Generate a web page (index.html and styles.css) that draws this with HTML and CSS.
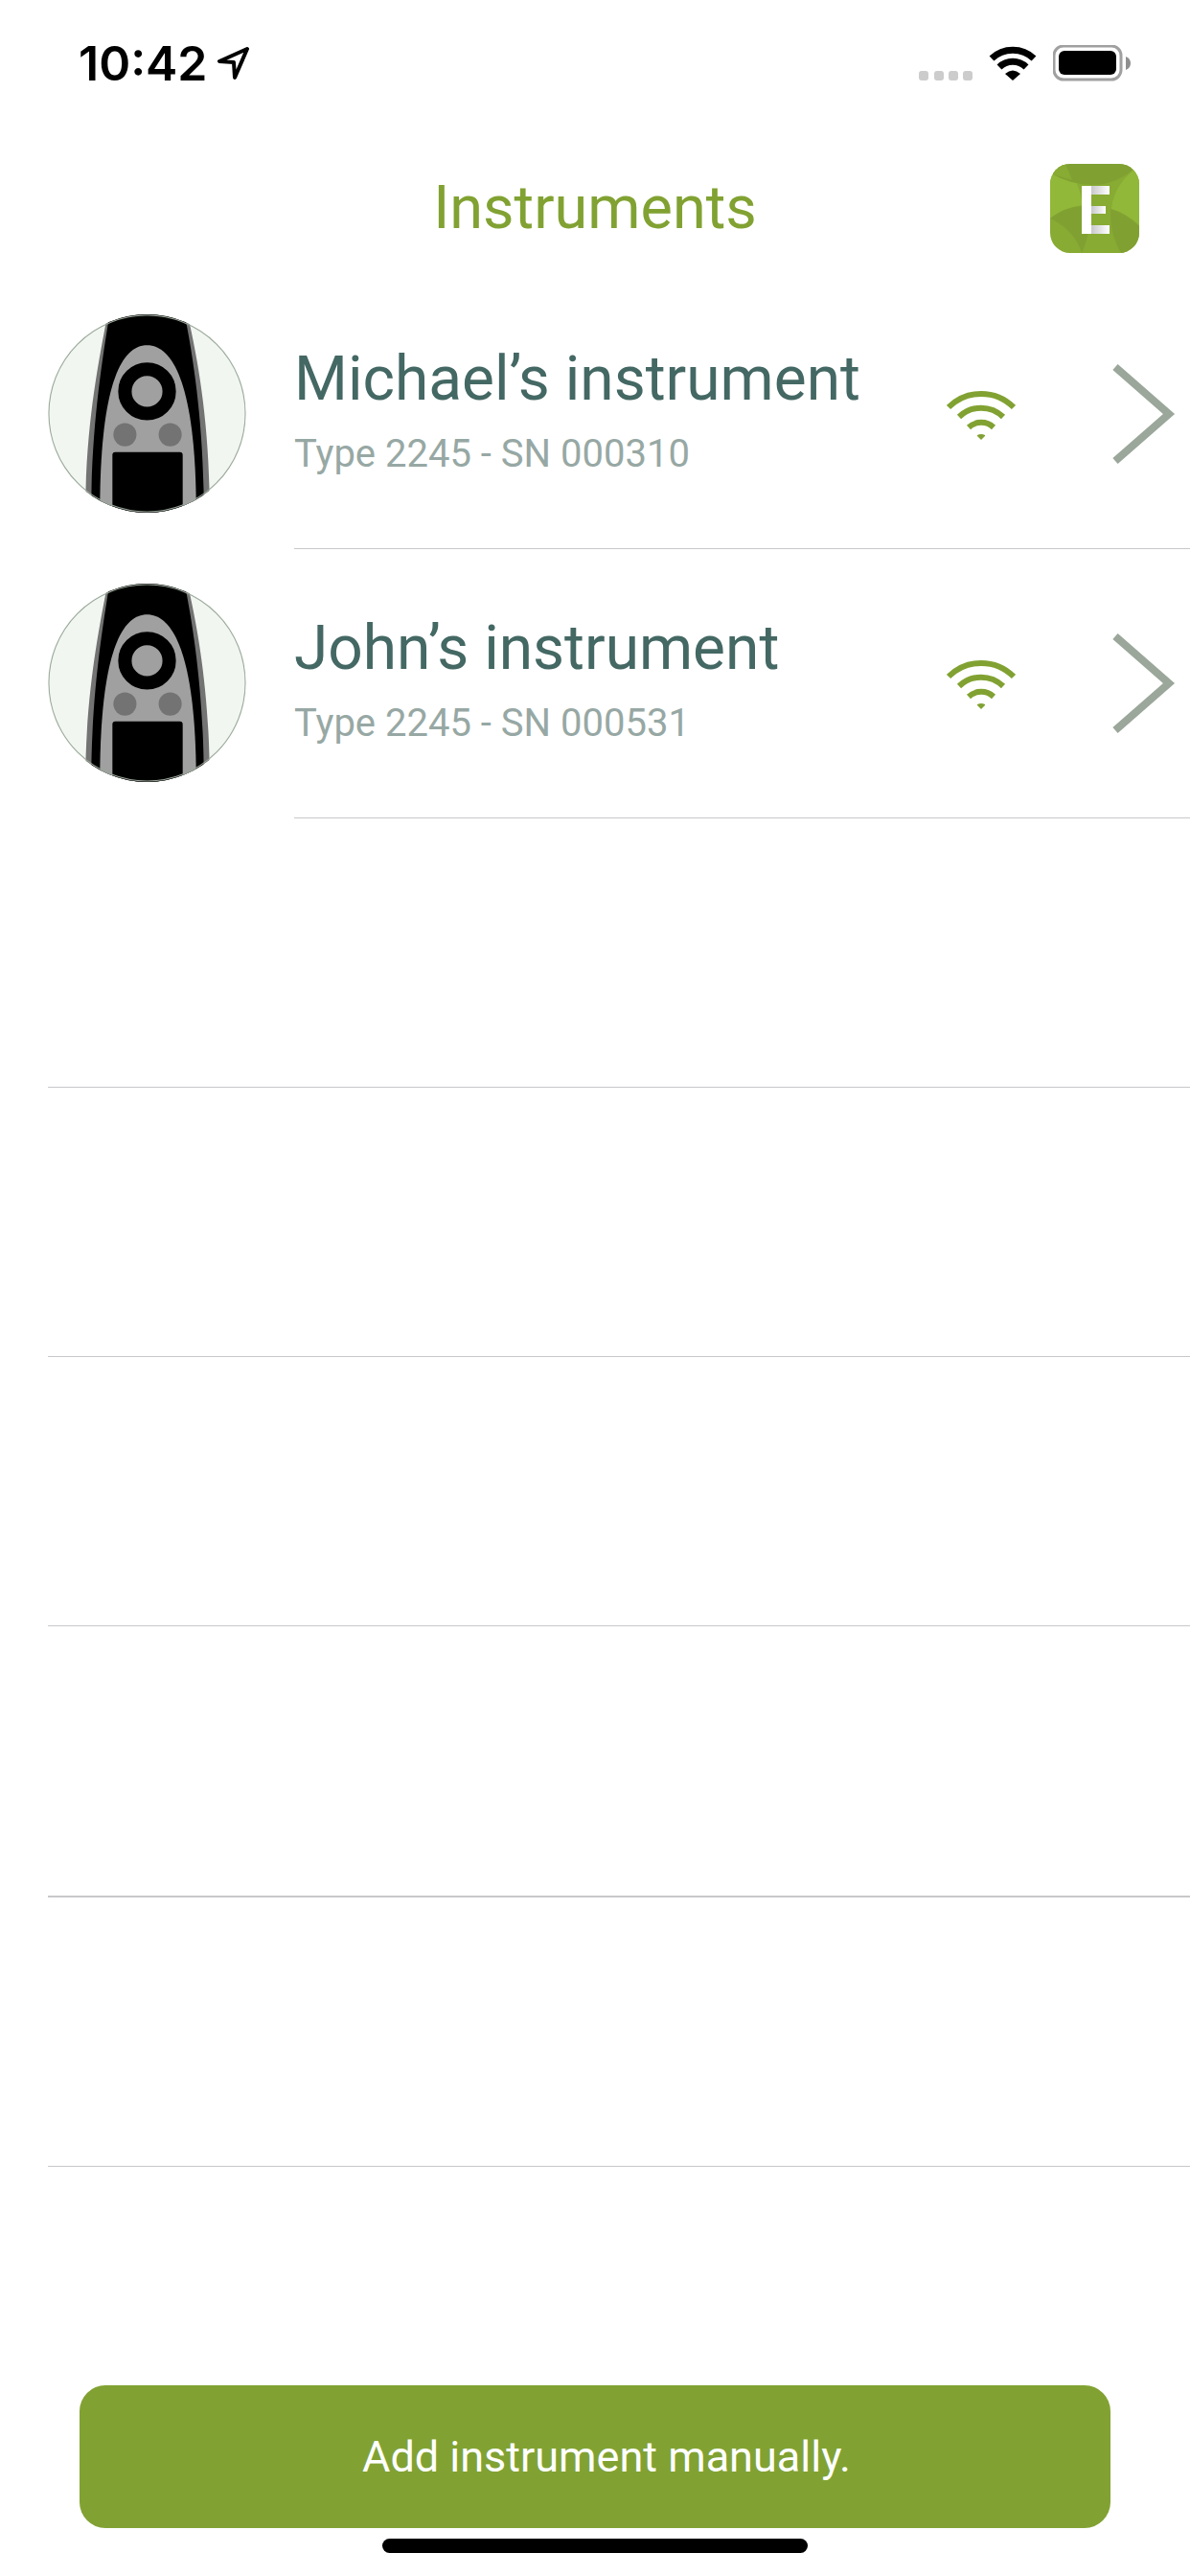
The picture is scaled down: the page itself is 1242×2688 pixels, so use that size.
FILE: index.html
```html
<!DOCTYPE html>
<html lang="en">
<head>
<meta charset="utf-8">
<meta name="viewport" content="width=device-width, initial-scale=1">
<title>Instruments</title>
<link rel="stylesheet" href="styles.css">
</head>
<body>
<svg width="0" height="0" class="defs" aria-hidden="true">
  <defs>
    <clipPath id="disc"><circle cx="103" cy="103" r="103"/></clipPath>
    <symbol id="meter" viewBox="0 0 206 206">
      <g clip-path="url(#disc)">
        <rect width="206" height="206" fill="#f1f6f1"/>
        <path d="M62 0C52 52 39 118 39 206H168C168 118 157 52 145 0Z" fill="#737373"/>
        <path d="M64 0C56 50 45 118 45 206H162C162 118 152 50 142 0Z" fill="#000"/>
        <path d="M54 206C54 80 74 32 103 32S154 80 154 206Z" fill="#a0a0a0"/>
        <circle cx="103" cy="80" r="23" fill="none" stroke="#000" stroke-width="14"/>
        <circle cx="80" cy="125" r="12" fill="#737373"/>
        <circle cx="127" cy="125" r="12" fill="#737373"/>
        <rect x="67" y="143" width="73" height="70" rx="3" fill="#000"/>
      </g>
      <circle cx="103" cy="103" r="102" fill="none" stroke="#9aa79a" stroke-width="1"/>
    </symbol>
    <symbol id="signal" viewBox="0 -4 72 56">
      <g fill="none" stroke="#81a232" stroke-width="6">
        <path d="M2 17A48 48 0 0 1 70 17"/>
        <path d="M13 27A33 33 0 0 1 59 27"/>
        <path d="M23 38A19 19 0 0 1 49 38"/>
      </g>
      <path d="M32 46Q36 44 40 46V47L36 51L32 47Z" fill="#81a232"/>
    </symbol>
    <symbol id="chevron" viewBox="0 0 68 106">
      <path d="M4 4L60 53L4 102" fill="none" stroke="#9aa79a" stroke-width="8"/>
    </symbol>
  </defs>
</svg>
<div class="screen">
  <div class="status">
    <div class="status-left">
      <span class="time">10:42</span>
      <svg class="location" viewBox="0 0 34 34" aria-hidden="true"><path d="M31 2L2 15L17 16L18 32Z" fill="none" stroke="#000" stroke-width="4" stroke-linejoin="round"/></svg>
    </div>
    <div class="status-right" aria-hidden="true">
      <svg class="cell" viewBox="0 0 56 38"><g fill="#ccc"><rect y="27" width="10" height="10" rx="3"/><rect x="16" y="27" width="10" height="10" rx="3"/><rect x="31" y="27" width="10" height="10" rx="3"/><rect x="46" y="27" width="10" height="10" rx="3"/></g></svg>
      <svg class="wifi" viewBox="0 0 50 38"><g fill="none" stroke="#000" stroke-width="7"><path d="M3 14A32 32 0 0 1 47 14"/><path d="M11 23A20 20 0 0 1 39 23"/></g><path d="M17 30Q25 23 33 30L25 37Z"/></svg>
      <svg class="battery" viewBox="0 0 81 38"><rect x="1" y="1" width="70" height="35" rx="10" fill="none" stroke="#a0a0a0" stroke-width="3"/><rect x="6" y="6" width="60" height="25" rx="6"/><path d="M76 12Q81 14 81 19T76 26Z" fill="#8f8f8f"/></svg>
    </div>
  </div>
  <header class="nav">
    <h1>Instruments</h1>
    <button class="app" type="button" aria-label="Enviro app">
      <svg viewBox="0 0 93 93" aria-hidden="true">
        <defs>
          <clipPath id="tile"><rect width="93" height="93" rx="21"/></clipPath>
          <linearGradient id="shade"><stop offset="0" stop-color="#c9c9cb"/><stop offset="1" stop-color="#fff"/></linearGradient>
        </defs>
        <g clip-path="url(#tile)">
          <rect width="93" height="93" fill="#88ab33"/>
          <path d="M0 0H16C26 14 32 27 34 43Q15 45 0 57Z" fill="#91b838"/>
          <path d="M93 0V64Q79 51 64 47C66 28 76 14 93 2Z" fill="#91b838"/>
          <path d="M16 0H93Q72 22 43 22Q20 21 3 11L0 0Z" fill="#80a132"/>
          <path d="M0 0H16L23 17L3 11Z" fill="#88ab33"/>
          <path d="M0 57Q16 44 38 44C43 62 40 78 33 93C28 77 17 65 0 57Z" fill="#80a132"/>
          <path d="M63 47Q80 52 93 65V93H74C66 80 62 63 63 47Z" fill="#80a132"/>
        </g>
        <rect x="33" y="23" width="10" height="50" fill="#fff"/>
        <rect x="43" y="23" width="19" height="9" fill="url(#shade)"/>
        <rect x="43" y="44" width="15" height="8" fill="url(#shade)"/>
        <rect x="43" y="64" width="19" height="9" fill="url(#shade)"/>
      </svg>
    </button>
  </header>
  <main>
    <ul class="list">
      <li class="row">
        <svg class="avatar" aria-hidden="true"><use href="#meter"/></svg>
        <a class="cell-link" href="#michael">
          <span class="info"><span class="name">Michael’s instrument</span><span class="serial">Type 2245 - SN 000310</span></span>
          <svg class="signal" aria-hidden="true"><use href="#signal"/></svg>
          <svg class="chevron" aria-hidden="true"><use href="#chevron"/></svg>
        </a>
      </li>
      <li class="row">
        <svg class="avatar" aria-hidden="true"><use href="#meter"/></svg>
        <a class="cell-link" href="#john">
          <span class="info"><span class="name">John’s instrument</span><span class="serial">Type 2245 - SN 000531</span></span>
          <svg class="signal" aria-hidden="true"><use href="#signal"/></svg>
          <svg class="chevron" aria-hidden="true"><use href="#chevron"/></svg>
        </a>
      </li>
      <li class="row empty"></li>
      <li class="row empty"></li>
      <li class="row empty"></li>
      <li class="row empty strong"></li>
      <li class="row empty"></li>
    </ul>
  </main>
  <footer>
    <button class="add" type="button">Add instrument manually.</button>
    <div class="home"></div>
  </footer>
</div>
</body>
</html>
```
FILE: styles.css
```css
* { box-sizing: border-box; }
body { margin: 0; background: #fff; font-family: Roboto, "Liberation Sans", sans-serif; }
svg { display: block; flex: none; }
.defs { position: absolute; }
.screen { min-height: 100vh; display: flex; flex-direction: column; }

.status { display: flex; justify-content: space-between; align-items: center; height: 132px; padding: 0 62px 0 82px; }
.status-left, .status-right { display: flex; align-items: center; }
.status-left { gap: 10px; }
.status-right { gap: 17px; }
.time { font: 600 50px/60px Inter, sans-serif; color: #000; }
.location { width: 34px; height: 34px; }
.cell { width: 56px; height: 38px; }
.wifi { width: 50px; height: 38px; }
.battery { width: 81px; height: 38px; }

.nav { display: grid; grid-template-columns: 1fr auto 1fr; align-items: center; height: 160px; padding: 10px 53px 0; }
h1 { grid-column: 2; margin: 0; font-size: 63px; line-height: 74px; font-weight: 400; color: #81a232; }
.app { justify-self: end; width: 93px; height: 93px; padding: 0; border: 0; background: none; }

main { flex: 1; }
.list { list-style: none; margin: 0; padding: 0 0 0 50px; }
.row { display: flex; align-items: center; gap: 50px; height: 281px; }
.empty { border-bottom: 1px solid #c8c8cb; }
.strong { height: 283px; border-bottom-width: 2px; }
.avatar { width: 207px; height: 207px; margin-bottom: 2px; }
.cell-link { flex: 1; align-self: stretch; display: flex; align-items: center; padding-right: 14px; border-bottom: 1px solid #c8c8cb; text-decoration: none; }
.info { flex: 1; display: flex; flex-direction: column; }
.name { font-size: 64px; line-height: 84px; color: #446864; }
.serial { font-size: 40px; line-height: 72px; color: #97a8a4; }
.signal { width: 72px; height: 56px; margin-right: 100px; }
.chevron { width: 68px; height: 106px; }

footer { display: flex; flex-direction: column; align-items: center; gap: 11px; padding: 0 83px 24px; }
.add { width: 100%; height: 149px; padding: 0 0 0 24px; border: 0; border-radius: 27px; background: #81a232; color: #fff; font: 400 45px/52px Roboto, "Liberation Sans", sans-serif; }
.home { width: 444px; max-width: 100%; height: 15px; border-radius: 8px; background: #000; }
```
